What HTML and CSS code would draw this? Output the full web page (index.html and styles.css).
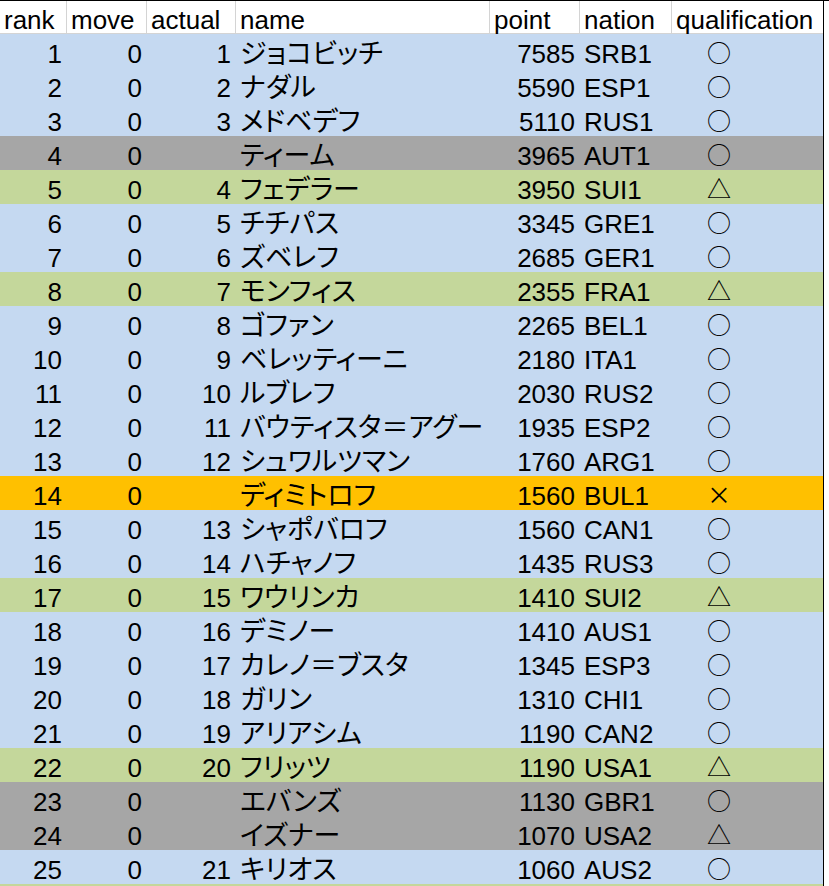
FILE: index.html
```html
<!DOCTYPE html>
<html lang="ja">
<head>
<meta charset="utf-8">
<title>ranking</title>
<link rel="stylesheet" href="styles.css">
</head>
<body>
<div class="sheet">
  <div class="row head">
    <div class="c l">rank</div>
    <div class="c l">move</div>
    <div class="c l">actual</div>
    <div class="c l">name</div>
    <div class="c l">point</div>
    <div class="c l">nation</div>
    <div class="c l">qualification</div>
  </div>
  <div class="row blue"><div class="c r">1</div><div class="c r">0</div><div class="c r">1</div><div class="c nm">ジョコビッチ</div><div class="c r">7585</div><div class="c l">SRB1</div><div class="c q">○</div></div>
  <div class="row blue"><div class="c r">2</div><div class="c r">0</div><div class="c r">2</div><div class="c nm">ナダル</div><div class="c r">5590</div><div class="c l">ESP1</div><div class="c q">○</div></div>
  <div class="row blue"><div class="c r">3</div><div class="c r">0</div><div class="c r">3</div><div class="c nm">メドベデフ</div><div class="c r">5110</div><div class="c l">RUS1</div><div class="c q">○</div></div>
  <div class="row gray"><div class="c r">4</div><div class="c r">0</div><div class="c r"></div><div class="c nm">ティーム</div><div class="c r">3965</div><div class="c l">AUT1</div><div class="c q">○</div></div>
  <div class="row green"><div class="c r">5</div><div class="c r">0</div><div class="c r">4</div><div class="c nm">フェデラー</div><div class="c r">3950</div><div class="c l">SUI1</div><div class="c q">△</div></div>
  <div class="row blue"><div class="c r">6</div><div class="c r">0</div><div class="c r">5</div><div class="c nm">チチパス</div><div class="c r">3345</div><div class="c l">GRE1</div><div class="c q">○</div></div>
  <div class="row blue"><div class="c r">7</div><div class="c r">0</div><div class="c r">6</div><div class="c nm">ズベレフ</div><div class="c r">2685</div><div class="c l">GER1</div><div class="c q">○</div></div>
  <div class="row green"><div class="c r">8</div><div class="c r">0</div><div class="c r">7</div><div class="c nm">モンフィス</div><div class="c r">2355</div><div class="c l">FRA1</div><div class="c q">△</div></div>
  <div class="row blue"><div class="c r">9</div><div class="c r">0</div><div class="c r">8</div><div class="c nm">ゴファン</div><div class="c r">2265</div><div class="c l">BEL1</div><div class="c q">○</div></div>
  <div class="row blue"><div class="c r">10</div><div class="c r">0</div><div class="c r">9</div><div class="c nm">ベレッティーニ</div><div class="c r">2180</div><div class="c l">ITA1</div><div class="c q">○</div></div>
  <div class="row blue"><div class="c r">11</div><div class="c r">0</div><div class="c r">10</div><div class="c nm">ルブレフ</div><div class="c r">2030</div><div class="c l">RUS2</div><div class="c q">○</div></div>
  <div class="row blue"><div class="c r">12</div><div class="c r">0</div><div class="c r">11</div><div class="c nm">バウティスタ＝アグー</div><div class="c r">1935</div><div class="c l">ESP2</div><div class="c q">○</div></div>
  <div class="row blue"><div class="c r">13</div><div class="c r">0</div><div class="c r">12</div><div class="c nm">シュワルツマン</div><div class="c r">1760</div><div class="c l">ARG1</div><div class="c q">○</div></div>
  <div class="row orange"><div class="c r">14</div><div class="c r">0</div><div class="c r"></div><div class="c nm">ディミトロフ</div><div class="c r">1560</div><div class="c l">BUL1</div><div class="c q">×</div></div>
  <div class="row blue"><div class="c r">15</div><div class="c r">0</div><div class="c r">13</div><div class="c nm">シャポバロフ</div><div class="c r">1560</div><div class="c l">CAN1</div><div class="c q">○</div></div>
  <div class="row blue"><div class="c r">16</div><div class="c r">0</div><div class="c r">14</div><div class="c nm">ハチャノフ</div><div class="c r">1435</div><div class="c l">RUS3</div><div class="c q">○</div></div>
  <div class="row green"><div class="c r">17</div><div class="c r">0</div><div class="c r">15</div><div class="c nm">ワウリンカ</div><div class="c r">1410</div><div class="c l">SUI2</div><div class="c q">△</div></div>
  <div class="row blue"><div class="c r">18</div><div class="c r">0</div><div class="c r">16</div><div class="c nm">デミノー</div><div class="c r">1410</div><div class="c l">AUS1</div><div class="c q">○</div></div>
  <div class="row blue"><div class="c r">19</div><div class="c r">0</div><div class="c r">17</div><div class="c nm">カレノ＝ブスタ</div><div class="c r">1345</div><div class="c l">ESP3</div><div class="c q">○</div></div>
  <div class="row blue"><div class="c r">20</div><div class="c r">0</div><div class="c r">18</div><div class="c nm">ガリン</div><div class="c r">1310</div><div class="c l">CHI1</div><div class="c q">○</div></div>
  <div class="row blue"><div class="c r">21</div><div class="c r">0</div><div class="c r">19</div><div class="c nm">アリアシム</div><div class="c r">1190</div><div class="c l">CAN2</div><div class="c q">○</div></div>
  <div class="row green"><div class="c r">22</div><div class="c r">0</div><div class="c r">20</div><div class="c nm">フリッツ</div><div class="c r">1190</div><div class="c l">USA1</div><div class="c q">△</div></div>
  <div class="row gray"><div class="c r">23</div><div class="c r">0</div><div class="c r"></div><div class="c nm">エバンズ</div><div class="c r">1130</div><div class="c l">GBR1</div><div class="c q">○</div></div>
  <div class="row gray"><div class="c r">24</div><div class="c r">0</div><div class="c r"></div><div class="c nm">イズナー</div><div class="c r">1070</div><div class="c l">USA2</div><div class="c q">△</div></div>
  <div class="row blue"><div class="c r">25</div><div class="c r">0</div><div class="c r">21</div><div class="c nm">キリオス</div><div class="c r">1060</div><div class="c l">AUS2</div><div class="c q">○</div></div>
  <div class="row green tail"></div>
</div>
</body>
</html>
```

FILE: styles.css
```css
html, body {
  margin: 0;
  padding: 0;
  background: #ffffff;
}

body {
  font-family: "Liberation Sans", "Noto Sans CJK JP", sans-serif;
  font-size: 26px;
  color: #000000;
  border-top: 1px solid #000000;
}

.sheet {
  width: 823px;
  border-right: 1px solid #000000;
}

.row {
  display: grid;
  grid-template-columns: 67px 80px 89px 254px 90px 92px 151px;
  height: 34px;
}

.tail {
  height: 2px;
}

.head {
  height: 32px;
  background: #ffffff;
  border-bottom: 1px solid #d4d4d4;
}

.head .c {
  border-right: 1px solid #d4d4d4;
  line-height: 38px;
  height: 32px;
  padding-left: 4px;
}

.head .c:last-child {
  border-right: none;
}

.blue { background: #c5d9f1; }
.gray { background: #a6a6a6; }
.green { background: #c4d79b; }
.orange { background: #ffc000; }

.c {
  white-space: nowrap;
  line-height: 40px;
  height: 34px;
  box-sizing: border-box;
}

.r {
  text-align: right;
  padding-right: 5px;
}

.l {
  text-align: left;
  padding-left: 4px;
}

.nm {
  padding-left: 4px;
  font-family: "Noto Sans CJK JP", "Liberation Sans", sans-serif;
  font-feature-settings: "palt";
  font-size: 27px;
  line-height: 34px;
  padding-top: 1px;
}

.q {
  padding-left: 35px;
  font-family: "Noto Sans CJK JP", sans-serif;
  font-size: 24px;
  line-height: 36px;
}
```
